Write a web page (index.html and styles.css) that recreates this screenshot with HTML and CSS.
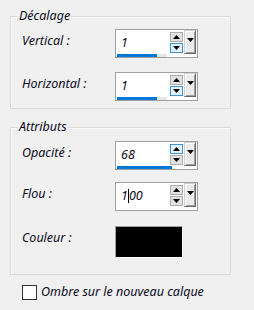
FILE: index.html
```html
<!DOCTYPE html>
<html lang="fr">
<head>
    <meta charset="UTF-8">
    <title>Ombre portée</title>
    <link rel="stylesheet" href="styles.css">
</head>
<body>

    <div class="group group-offset">
        <span class="group-title">Décalage</span>
        <div class="row">
            <span class="label">Vertical :</span>
            <div class="spin">
                <span class="spin-value">1</span>
                <div class="spin-buttons">
                    <span class="spin-btn"><svg width="7" height="4"><polygon points="0,4 7,4 3.5,0" fill="#000"/></svg></span>
                    <span class="spin-btn active"><svg width="7" height="4"><polygon points="0,0 7,0 3.5,4" fill="#000"/></svg></span>
                </div>
                <span class="drop-btn"><svg width="7" height="4"><polygon points="0,0 7,0 3.5,4" fill="#000"/></svg></span>
                <span class="spin-track"></span>
                <span class="spin-bar" style="width: 40px"></span>
            </div>
        </div>
        <div class="row">
            <span class="label">Horizontal :</span>
            <div class="spin">
                <span class="spin-value">1</span>
                <div class="spin-buttons">
                    <span class="spin-btn"><svg width="7" height="4"><polygon points="0,4 7,4 3.5,0" fill="#000"/></svg></span>
                    <span class="spin-btn active"><svg width="7" height="4"><polygon points="0,0 7,0 3.5,4" fill="#000"/></svg></span>
                </div>
                <span class="drop-btn"><svg width="7" height="4"><polygon points="0,0 7,0 3.5,4" fill="#000"/></svg></span>
                <span class="spin-track"></span>
                <span class="spin-bar" style="width: 40px"></span>
            </div>
        </div>
    </div>

    <div class="group group-attr">
        <span class="group-title">Attributs</span>
        <div class="row">
            <span class="label">Opacité :</span>
            <div class="spin">
                <span class="spin-value">68</span>
                <div class="spin-buttons">
                    <span class="spin-btn active"><svg width="7" height="4"><polygon points="0,4 7,4 3.5,0" fill="#000"/></svg></span>
                    <span class="spin-btn"><svg width="7" height="4"><polygon points="0,0 7,0 3.5,4" fill="#000"/></svg></span>
                </div>
                <span class="drop-btn"><svg width="7" height="4"><polygon points="0,0 7,0 3.5,4" fill="#000"/></svg></span>
                <span class="spin-bar" style="width: 55px"></span>
            </div>
        </div>
        <div class="row row-flou">
            <span class="label">Flou :</span>
            <div class="spin">
                <span class="spin-value">1<span class="caret"></span>00</span>
                <div class="spin-buttons">
                    <span class="spin-btn"><svg width="7" height="4"><polygon points="0,4 7,4 3.5,0" fill="#000"/></svg></span>
                    <span class="spin-btn"><svg width="7" height="4"><polygon points="0,0 7,0 3.5,4" fill="#000"/></svg></span>
                </div>
                <span class="drop-btn"><svg width="7" height="4"><polygon points="0,0 7,0 3.5,4" fill="#000"/></svg></span>
            </div>
        </div>
        <div class="row row-color">
            <span class="label">Couleur :</span>
            <span class="swatch"></span>
        </div>
    </div>

    <label class="check">
        <span class="check-box"></span>
        <span>Ombre sur le nouveau calque</span>
    </label>

</body>
</html>
```

FILE: styles.css
```css
        body {
            margin: 0;
            padding: 0;
            background-color: #f0f0f0;
            font-family: "Noto Sans", "Open Sans", sans-serif;
            font-style: italic;
            font-size: 12.5px;
            line-height: 16px;
            color: #0c0c1c;
            width: 254px;
            height: 310px;
            overflow: hidden;
        }
        .group {
            position: relative;
            margin-left: 10px;
            width: 208px;
            border: 1px solid #dcdcdc;
            box-shadow: inset 1px 1px 0 #fafafa;
            display: flex;
            flex-direction: column;
        }
        .group-offset {
            margin-top: 16px;
            padding: 12px 0 7px 11px;
            gap: 14px;
        }
        .group-attr {
            margin-top: 18px;
            padding: 13px 0 16px 11px;
            gap: 12px;
        }
        .group-title {
            position: absolute;
            top: -9px;
            left: 7px;
            padding: 0 1px;
            background-color: #f0f0f0;
        }
        .row {
            display: flex;
            align-items: flex-start;
        }
        .row-color {
            margin-top: 3px;
        }
        .label {
            width: 93px;
            padding-top: 4px;
        }
        .spin {
            position: relative;
            display: flex;
            align-items: flex-start;
            width: 81px;
            height: 27px;
            border: 1px solid #a0a0a0;
            background-color: white;
        }
        .spin-value {
            flex: 1;
            padding: 5px 0 0 5px;
        }
        .caret {
            display: inline-block;
            width: 1px;
            height: 14px;
            margin: 0 0 -3px 0;
            vertical-align: baseline;
            background-color: #000;
        }
        .spin-buttons {
            display: flex;
            flex-direction: column;
            gap: 1px;
            margin-top: 2px;
            width: 13px;
        }
        .spin-btn {
            display: flex;
            align-items: center;
            justify-content: center;
            height: 8px;
            background-color: #e1e1e1;
            border: 1px solid #adadad;
            box-sizing: content-box;
            width: 11px;
        }
        .spin-btn.active {
            background-color: #e5f1fb;
            border-color: #3c94dc;
        }
        .drop-btn {
            display: flex;
            justify-content: center;
            flex-shrink: 0;
            box-sizing: border-box;
            width: 12px;
            height: 24px;
            margin: 0 1px 0 1px;
            padding-top: 7px;
            background-color: #ececec;
            border-top: 1px solid #d0d0d0;
            border-left: 1px solid #d0d0d0;
            border-right: 1px solid #696969;
            border-bottom: 1px solid #696969;
            box-shadow: inset 1px 1px 0 #fff, inset -1px -1px 0 #a0a0a0;
        }
        .spin-track {
            position: absolute;
            left: 1px;
            bottom: 0;
            width: 50px;
            height: 3px;
            background-color: #e6e6e6;
        }
        .spin-bar {
            position: absolute;
            left: 1px;
            bottom: 0;
            height: 3px;
            background-color: #0078d7;
        }
        .swatch {
            display: block;
            width: 66px;
            height: 30px;
            background-color: #000;
            border-top: 1px solid #a0a0a0;
            border-left: 1px solid #a0a0a0;
            border-right: 1px solid #fff;
            border-bottom: 1px solid #fff;
        }
        .check {
            display: flex;
            align-items: center;
            gap: 4px;
            margin: 9px 0 0 22px;
        }
        .check-box {
            width: 13px;
            height: 13px;
            border: 1px solid #333;
            background-color: white;
        }
```
